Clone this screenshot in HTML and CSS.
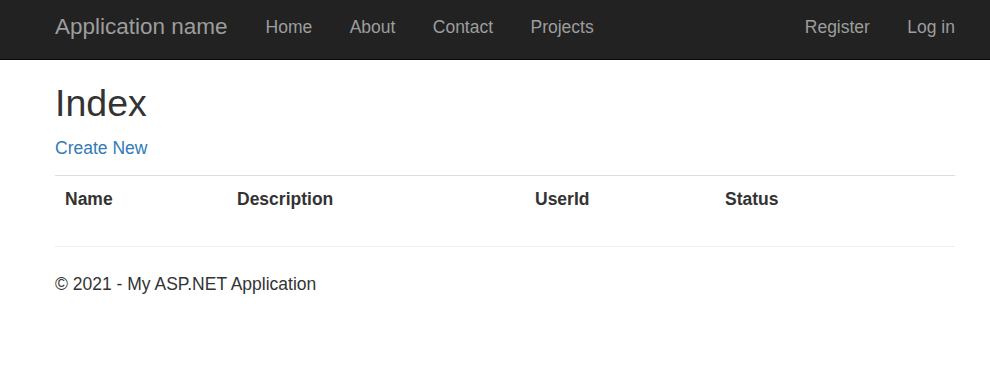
FILE: index.html
```html
<!DOCTYPE html>
<html lang="en">
<head>
  <meta charset="UTF-8">
  <meta name="viewport" content="width=device-width, initial-scale=1.0">
  <title>Index - My ASP.NET Application</title>
  <link rel="stylesheet" href="styles.css">
</head>
<body>
  <div class="navbar">
    <div class="container nav-inner">
      <a class="brand" href="#">Application name</a>
      <ul class="nav">
        <li><a href="#">Home</a></li>
        <li><a href="#">About</a></li>
        <li><a href="#">Contact</a></li>
        <li><a href="#">Projects</a></li>
      </ul>
      <ul class="nav nav-right">
        <li><a href="#">Register</a></li>
        <li><a href="#">Log in</a></li>
      </ul>
    </div>
  </div>

  <div class="container body-content">
    <h2>Index</h2>
    <p class="create"><a href="#">Create New</a></p>

    <table class="table">
      <tr>
        <th class="col-name">Name</th>
        <th class="col-desc">Description</th>
        <th class="col-user">UserId</th>
        <th class="col-status">Status</th>
      </tr>
    </table>

    <hr>
    <footer>
      <p>&copy; 2021 - My ASP.NET Application</p>
    </footer>
  </div>
</body>
</html>
```

FILE: styles.css
```css
body {
  margin: 0;
  font-family: "Liberation Sans", Arial, sans-serif;
  font-size: 17.5px;
  line-height: 24px;
  color: #333;
  background: #fff;
}

a {
  color: #337ab7;
  text-decoration: none;
}

.container {
  width: 900px;
  margin-left: 55px;
}

/* top bar */
.navbar {
  height: 59px;
  background-color: #222;
  border-bottom: 1px solid #080808;
}

.nav-inner {
  display: flex;
  align-items: center;
  height: 59px;
  padding-bottom: 6px;
  box-sizing: border-box;
}

.brand {
  font-size: 22.5px;
  color: #9d9d9d;
  margin-right: 19.3px;
}

.nav {
  display: flex;
  list-style: none;
  margin: 0;
  padding: 0;
}

.nav a {
  display: block;
  padding: 0 18.7px;
  color: #9d9d9d;
  line-height: 24px;
}

.nav-right {
  margin-left: auto;
  margin-right: -18.7px;
}

/* page */
h2 {
  font-size: 37.5px;
  font-weight: 500;
  line-height: 1.1;
  margin: 23px 0 12px;
}

.create {
  margin: 0 0 15px;
}

.table {
  width: 100%;
  border-collapse: collapse;
  margin-bottom: 24px;
}

.table th {
  text-align: left;
  padding: 11px 10px 8px;
  border-top: 1px solid #ddd;
  font-weight: bold;
}

.col-name { width: 152px; }
.col-desc { width: 278px; }
.col-user { width: 170px; }

hr {
  border: 0;
  border-top: 1px solid #eee;
  margin: 27px 0 25px;
}

footer p {
  margin: 0;
}
```
